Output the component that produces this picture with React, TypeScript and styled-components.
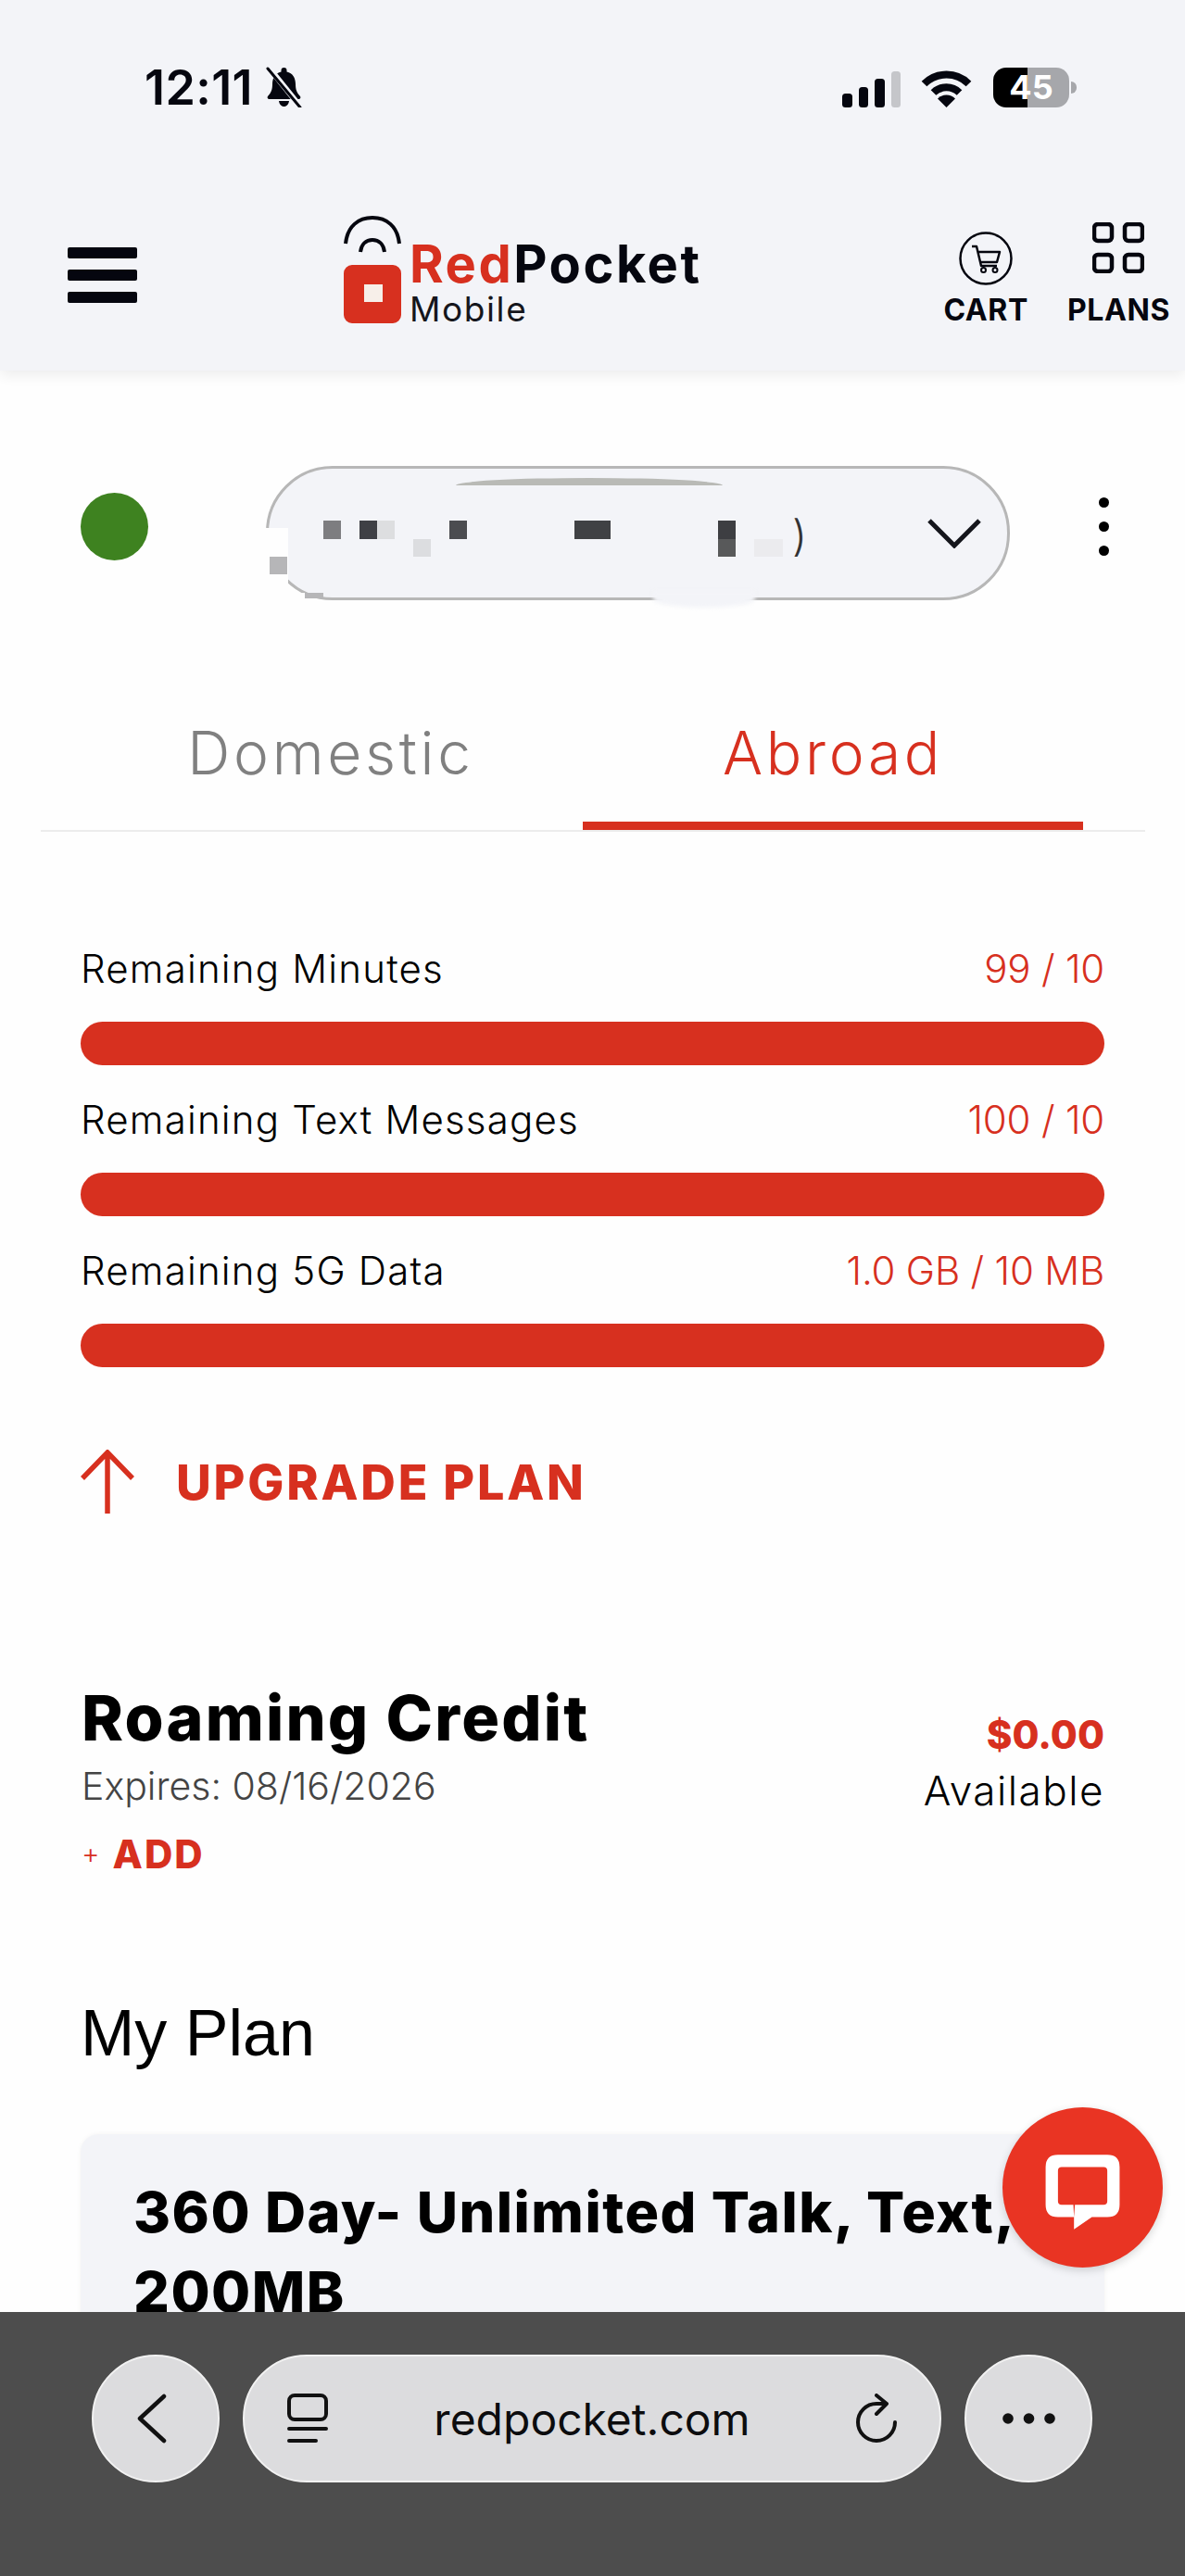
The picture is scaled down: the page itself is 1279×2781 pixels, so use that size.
import React from "react";
import styled, { createGlobalStyle } from "styled-components";

const RED = "#d7301f";
const PANEL = "#f3f4f8";
const INK = "#05060f";
const SANS = `Inter, "Liberation Sans", sans-serif`;

const Global = createGlobalStyle`
  html, body { margin: 0; padding: 0; background: #fff; }
  * { box-sizing: border-box; }
`;

const Shell = styled.div`
  position: relative;
  width: 1279px;
  height: 2781px;
  overflow: hidden;
  background: #fefefe;
  font-family: ${SANS};
  color: #000;
`;

const Header = styled.header`
  height: 400px;
  background: ${PANEL};
  box-shadow: 0 5px 14px rgba(0, 0, 0, 0.07);
`;

const StatusBar = styled.div`
  height: 233px;
  padding: 72px 125px 0 156px;
  display: flex;
  align-items: flex-start;
  justify-content: space-between;
`;

const Clock = styled.div`
  display: flex;
  align-items: center;
  gap: 12px;
  height: 44px;
  font-size: 52px;
  font-weight: 600;
  letter-spacing: 0.4px;
  color: ${INK};
`;

const Indicators = styled.div`
  display: flex;
  align-items: flex-end;
  height: 44px;
`;

const Signal = styled.div`
  display: flex;
  align-items: flex-end;
  gap: 7px;
  margin-right: 22px;
`;

const SignalBar = styled.span<{ $h: number; $off?: boolean }>`
  display: block;
  width: 10.5px;
  height: ${(p) => p.$h}px;
  border-radius: 3.5px;
  background: ${(p) => (p.$off ? "#c5c6ca" : INK)};
`;

const Battery = styled.div`
  position: relative;
  width: 82px;
  height: 43px;
  margin-left: 23px;
  border-radius: 14px;
  background: linear-gradient(90deg, #000 45%, #a6a7ab 45%);
  color: #fff;
  font-size: 36px;
  font-weight: 700;
  line-height: 43px;
  text-align: center;
  &::after {
    content: "";
    position: absolute;
    left: 84px;
    top: 15px;
    width: 6px;
    height: 13px;
    border-radius: 0 6px 6px 0;
    background: #a6a7ab;
  }
`;

const Nav = styled.nav`
  display: flex;
  align-items: flex-start;
  padding: 0 16px 0 73px;
`;

const Burger = styled.div`
  display: flex;
  flex-direction: column;
  gap: 12px;
  width: 75px;
  margin-top: 34px;
`;

const BurgerBar = styled.span`
  display: block;
  height: 12px;
  border-radius: 2px;
  background: ${INK};
`;

const Logo = styled.div`
  display: flex;
  align-items: flex-end;
  gap: 9px;
  margin-left: 223px;
`;

const LogoWords = styled.div`
  display: flex;
  flex-direction: column;
  margin-bottom: -3px;
`;

const Brand = styled.div`
  margin-bottom: 3px;
  font-size: 56px;
  font-weight: 700;
  line-height: 56px;
  letter-spacing: 2.5px;
  color: ${INK};
  span { color: ${RED}; }
`;

const Sub = styled.div`
  font-size: 37px;
  font-weight: 400;
  line-height: 36px;
  letter-spacing: 1.6px;
  color: #15161c;
`;

const Actions = styled.div`
  display: flex;
  gap: 42px;
  margin-left: auto;
  margin-top: 7px;
`;

const Action = styled.div`
  display: flex;
  flex-direction: column;
  align-items: center;
`;

const ActionIcon = styled.div<{ $top: number }>`
  height: 78px;
  padding-top: ${(p) => p.$top}px;
`;

const ActionLabel = styled.div`
  font-size: 32px;
  font-weight: 700;
  line-height: 34px;
  letter-spacing: 0.6px;
  color: ${INK};
`;

const AccountRow = styled.section`
  display: flex;
  align-items: center;
  height: 145px;
  margin-top: 103px;
  padding-left: 87px;
`;

const Dot = styled.div`
  width: 73px;
  height: 73px;
  margin-bottom: 14px;
  border-radius: 50%;
  background: #3e8220;
`;

const Pill = styled.div`
  position: relative;
  display: flex;
  align-items: center;
  justify-content: flex-end;
  width: 803px;
  height: 145px;
  margin-left: 127px;
  padding: 0 28px 0 0;
  border: 3px solid #b7b7b7;
  border-radius: 72px;
  background: ${PANEL};
`;

const Patch = styled.span<{ $x: number; $y: number; $w: number; $h: number; $c: string; $soft?: boolean }>`
  position: absolute;
  left: ${(p) => p.$x - 290}px;
  top: ${(p) => p.$y - 506}px;
  width: ${(p) => p.$w}px;
  height: ${(p) => p.$h}px;
  background: ${(p) => p.$c};
  ${(p) => (p.$soft ? "border-radius: 0 0 50% 50%; filter: blur(2px);" : "")}
`;

const Lens = styled.span`
  position: absolute;
  left: 202px;
  top: 10px;
  width: 288px;
  height: 8px;
  background: #b9bab6;
  border-radius: 50% 50% 0 0 / 100% 100% 0 0;
`;

const MaskedEnd = styled.span`
  margin-right: 130px;
  margin-top: 4px;
  font-size: 46px;
  font-weight: 300;
  line-height: 54px;
  color: #333;
`;

const Kebab = styled.div`
  display: flex;
  flex-direction: column;
  gap: 15px;
  margin-left: 96px;
  margin-bottom: 14px;
`;

const KebabDot = styled.span`
  display: block;
  width: 11px;
  height: 11px;
  border-radius: 50%;
  background: #000;
`;

const Tabs = styled.div`
  display: flex;
  margin: 120px 43px 0 44px;
  padding-left: 41px;
  border-bottom: 2px solid #ececec;
`;

const Tab = styled.div<{ $active?: boolean }>`
  width: ${(p) => (p.$active ? 540 : 544)}px;
  height: 128px;
  padding-bottom: 29px;
  border-bottom: 9px solid ${(p) => (p.$active ? RED : "transparent")};
  font-size: 64px;
  font-weight: 300;
  line-height: 90px;
  letter-spacing: 3.7px;
  text-align: center;
  color: ${(p) => (p.$active ? RED : "#808080")};
`;

const Metrics = styled.section`
  margin: 123px 87px 0;
`;

const MetricHead = styled.div`
  display: flex;
  justify-content: space-between;
  align-items: center;
  height: 48px;
  font-size: 42px;
  font-weight: 300;
  letter-spacing: 1.2px;
`;

const MetricValue = styled.span`
  color: ${RED};
  letter-spacing: -0.2px;
`;

const MetricBar = styled.div`
  height: 47px;
  margin: 34px 0;
  border-radius: 24px;
  background: ${RED};
`;

const Upgrade = styled.div`
  display: flex;
  align-items: center;
  gap: 45px;
  height: 70px;
  margin: 89px 87px 0;
  font-size: 52px;
  font-weight: 800;
  letter-spacing: 2.8px;
  color: ${RED};
`;

const Credit = styled.section`
  display: flex;
  justify-content: space-between;
  margin: 179px 87px 0;
`;

const CreditTitle = styled.h2`
  margin: 0;
  padding-left: 1px;
  font-size: 68px;
  font-weight: 800;
  line-height: 80px;
  letter-spacing: 2.2px;
`;

const Expires = styled.div`
  margin-top: 9px;
  padding-left: 1px;
  font-size: 41px;
  font-weight: 300;
  line-height: 50px;
  color: #444;
`;

const AddLink = styled.div`
  display: flex;
  align-items: center;
  gap: 12px;
  height: 40px;
  margin-top: 28px;
  padding-left: 1px;
  font-size: 42px;
  font-weight: 800;
  letter-spacing: 2px;
  color: ${RED};
`;

const AddPlus = styled.span`
  font-size: 30px;
  font-weight: 300;
`;

const Balance = styled.div`
  padding-top: 34px;
  text-align: right;
`;

const BalanceAmount = styled.div`
  font-size: 42px;
  font-weight: 800;
  line-height: 50px;
  color: ${RED};
`;

const BalanceNote = styled.div`
  margin-top: 10px;
  font-size: 44px;
  font-weight: 300;
  line-height: 50px;
  letter-spacing: 1.5px;
`;

const PlanTitle = styled.h2`
  margin: 129px 87px 0;
  font-family: "Liberation Sans", Arial, sans-serif;
  font-size: 70px;
  font-weight: 400;
  line-height: 90px;
`;

const PlanCard = styled.article`
  margin: 64px 87px 0;
  height: 400px;
  padding: 41px 57px;
  border-radius: 20px;
  background: ${PANEL};
  box-shadow: 0 0 5px rgba(0, 0, 0, 0.05);
`;

const PlanName = styled.h3`
  margin: 0;
  font-size: 61px;
  font-weight: 800;
  line-height: 86px;
  letter-spacing: 1.5px;
`;

const ChatFab = styled.div`
  position: absolute;
  left: 1082px;
  top: 2275px;
  width: 173px;
  height: 173px;
  border-radius: 50%;
  background: #e93423;
  box-shadow: 0 3px 10px rgba(0, 0, 0, 0.16);
  svg { display: block; width: 100%; height: 100%; }
`;

const BrowserBar = styled.footer`
  position: absolute;
  left: 0;
  right: 0;
  bottom: 0;
  height: 285px;
  display: flex;
  gap: 25px;
  padding: 46px 0 0 99px;
  background: #4d4d4d;
`;

const RoundButton = styled.div`
  display: flex;
  align-items: center;
  justify-content: center;
  width: 138px;
  height: 138px;
  border: 2px solid #f2f2f2;
  border-radius: 50%;
  background: #dcdcde;
`;

const BackSvg = styled.svg`
  margin-right: 9px;
`;

const UrlPill = styled.div`
  display: grid;
  grid-template-columns: 1fr auto 1fr;
  align-items: center;
  width: 754px;
  height: 138px;
  padding: 0 46px;
  border: 2px solid #f2f2f2;
  border-radius: 69px;
  background: #dcdcde;
`;

const UrlText = styled.div`
  font-size: 48px;
  font-weight: 400;
  color: #0c0c0e;
`;

const UrlRight = styled.div`
  justify-self: end;
  line-height: 0;
`;

const patches = [
  { x: 284, y: 570, w: 27, h: 84, c: "#fefefe" },
  { x: 311, y: 640, w: 18, h: 14, c: "#fefefe" },
  { x: 291, y: 601, w: 19, h: 19, c: "#b6b6b8" },
  { x: 329, y: 640, w: 20, h: 6, c: "#b6b6b8" },
  { x: 349, y: 562, w: 19, h: 20, c: "#7d7d80" },
  { x: 388, y: 562, w: 19, h: 20, c: "#3f4045" },
  { x: 407, y: 562, w: 19, h: 20, c: "#dddee0" },
  { x: 446, y: 582, w: 19, h: 19, c: "#dcdde0" },
  { x: 485, y: 562, w: 19, h: 20, c: "#4b4c50" },
  { x: 620, y: 562, w: 39, h: 20, c: "#404144" },
  { x: 775, y: 562, w: 19, h: 20, c: "#3d3e42" },
  { x: 775, y: 582, w: 19, h: 19, c: "#58595a" },
  { x: 814, y: 582, w: 31, h: 19, c: "#ebebee" },
];

const metrics = [
  { label: "Remaining Minutes", value: "99 / 10" },
  { label: "Remaining Text Messages", value: "100 / 10" },
  { label: "Remaining 5G Data", value: "1.0 GB / 10 MB" },
];

const BellOff = () => (
  <svg width="43" height="44" viewBox="0 0 43 44" aria-hidden="true">
    <path fill={INK} d="M21.5 1c-2 0-3 1.300-3 3v1.500C12 7 9 12 9 19c0 6-1.500 9-5 13-1 1.500 0 3 1.500 3h32c1.500 0 2.500-1.500 1.500-3-3.500-4-5-7-5-13 0-7-3-12-9.500-13.500V4c0-1.700-1-3-3-3z" />
    <path fill={INK} d="M16 37h11c-.5 3.500-2.500 6-5.500 6S16.500 40.500 16 37z" />
    <path stroke={PANEL} strokeWidth="6" d="M6 2l33 41" />
    <path stroke={INK} strokeWidth="3" strokeLinecap="round" d="M4 2l35 42" />
  </svg>
);

const Wifi = () => (
  <svg width="55" height="40" viewBox="0 0 55 40" aria-hidden="true">
    <path fill="none" stroke={INK} strokeWidth="8" d="M3.500 14.500a34 34 0 0 1 48 0" />
    <path fill="none" stroke={INK} strokeWidth="8" d="M13.500 24a20 20 0 0 1 28 0" />
    <path fill={INK} d="M27.500 40L18 30.500a13.500 13.500 0 0 1 19 0z" />
  </svg>
);

const LogoMark = () => (
  <svg width="62" height="116" viewBox="0 0 62 116" aria-hidden="true">
    <path fill="none" stroke={INK} strokeWidth="4" d="M2 30C4 11 16 2 31 2s27 9 29 28" />
    <path fill="none" stroke={INK} strokeWidth="4" d="M18 39c1-8 6-13 13-13s12 5 13 13" />
    <path fill={RED} fillRule="evenodd" d="M9 53h44a9 9 0 0 1 9 9v45a9 9 0 0 1-9 9H9a9 9 0 0 1-9-9V62a9 9 0 0 1 9-9zm13 21v19h20V74z" />
    <rect x="22" y="74" width="20" height="19" fill="#f7efe9" />
  </svg>
);

const CartIcon = () => (
  <svg width="58" height="58" viewBox="0 0 58 58" fill="none" stroke={INK} aria-hidden="true">
    <circle cx="29" cy="29" r="27.500" strokeWidth="2.500" />
    <path strokeWidth="2.500" strokeLinejoin="round" d="M14 16h5l5 21h17M21 22h23l-3 11H23.500" />
    <circle cx="26.500" cy="41.500" r="2.500" strokeWidth="2" />
    <circle cx="39" cy="41.500" r="2.500" strokeWidth="2" />
  </svg>
);

const PlansIcon = () => (
  <svg width="56" height="55" viewBox="0 0 56 55" fill="none" stroke={INK} strokeWidth="4.500" aria-hidden="true">
    <rect x="2" y="2" width="19" height="18" rx="4" />
    <rect x="35" y="2" width="19" height="18" rx="4" />
    <rect x="2" y="35" width="19" height="18" rx="4" />
    <rect x="35" y="35" width="19" height="18" rx="4" />
  </svg>
);

const Chevron = () => (
  <svg width="58" height="32" viewBox="0 0 58 32" fill="none" stroke="#15161c" strokeWidth="5" aria-hidden="true">
    <path d="M2 2l27 27L56 2" />
  </svg>
);

const UpArrow = () => (
  <svg width="58" height="70" viewBox="0 0 58 70" fill="none" stroke={RED} strokeWidth="5.500" aria-hidden="true">
    <path d="M29 69V3M2 31L29 3l27 28" />
  </svg>
);

const ChatIcon = () => (
  <svg viewBox="5 9 520 520" aria-hidden="true">
    <path
      fill="#fff"
      fillRule="evenodd"
      d="M185 163H345Q385 163 385 203V325Q385 365 345 365H295L237 405V365H185Q145 365 145 325V203Q145 163 185 163ZM197 203Q185 203 185 215V313Q185 325 197 325H235L237 365L240 325H333Q345 325 345 313V215Q345 203 333 203Z"
    />
  </svg>
);

const BackIcon = () => (
  <BackSvg width="32" height="54" viewBox="0 0 32 54" fill="none" stroke="#111" strokeWidth="4.500" strokeLinecap="round" strokeLinejoin="round" aria-hidden="true">
    <path d="M29 3L3 27l26 24" />
  </BackSvg>
);

const TabsIcon = () => (
  <svg width="44" height="54" viewBox="0 0 44 54" fill="none" stroke="#111" strokeWidth="4" strokeLinecap="round" aria-hidden="true">
    <rect x="2" y="2" width="40" height="26" rx="6" />
    <path d="M2 38h40M2 51h29" />
  </svg>
);

const ReloadIcon = () => (
  <svg width="44" height="54" viewBox="0 0 44 54" fill="none" stroke="#111" strokeWidth="4" strokeLinecap="round" strokeLinejoin="round" aria-hidden="true">
    <path d="M42 31a20 20 0 1 1-20-20h11M22 2l11 9-11 11" />
  </svg>
);

const MoreIcon = () => (
  <svg width="57" height="12" viewBox="0 0 57 12" fill="#111" aria-hidden="true">
    <circle cx="6" cy="6" r="5.800" />
    <circle cx="28.500" cy="6" r="5.800" />
    <circle cx="51" cy="6" r="5.800" />
  </svg>
);

export default function App() {
  return (
    <>
      <Global />
      <Shell>
        <Header>
          <StatusBar>
            <Clock>
              12:11
              <BellOff />
            </Clock>
            <Indicators>
              <Signal>
                <SignalBar $h={15} />
                <SignalBar $h={22} />
                <SignalBar $h={31} />
                <SignalBar $h={39} $off />
              </Signal>
              <Wifi />
              <Battery>45</Battery>
            </Indicators>
          </StatusBar>
          <Nav>
            <Burger>
              <BurgerBar />
              <BurgerBar />
              <BurgerBar />
            </Burger>
            <Logo>
              <LogoMark />
              <LogoWords>
                <Brand>
                  <span>Red</span>Pocket
                </Brand>
                <Sub>Mobile</Sub>
              </LogoWords>
            </Logo>
            <Actions>
              <Action>
                <ActionIcon $top={10}>
                  <CartIcon />
                </ActionIcon>
                <ActionLabel>CART</ActionLabel>
              </Action>
              <Action>
                <ActionIcon $top={0}>
                  <PlansIcon />
                </ActionIcon>
                <ActionLabel>PLANS</ActionLabel>
              </Action>
            </Actions>
          </Nav>
        </Header>

        <AccountRow>
          <Dot />
          <Pill>
            <Lens />
            {patches.map((p) => (
              <Patch key={`${p.x}-${p.y}`} $x={p.x} $y={p.y} $w={p.w} $h={p.h} $c={p.c} />
            ))}
            <Patch $x={705} $y={638} $w={110} $h={18} $c={PANEL} $soft />
            <MaskedEnd>)</MaskedEnd>
            <Chevron />
          </Pill>
          <Kebab>
            <KebabDot />
            <KebabDot />
            <KebabDot />
          </Kebab>
        </AccountRow>

        <Tabs>
          <Tab>Domestic</Tab>
          <Tab $active>Abroad</Tab>
        </Tabs>

        <Metrics>
          {metrics.map((m) => (
            <div key={m.label}>
              <MetricHead>
                <span>{m.label}</span>
                <MetricValue>{m.value}</MetricValue>
              </MetricHead>
              <MetricBar />
            </div>
          ))}
        </Metrics>

        <Upgrade>
          <UpArrow />
          UPGRADE PLAN
        </Upgrade>

        <Credit>
          <div>
            <CreditTitle>Roaming Credit</CreditTitle>
            <Expires>Expires: 08/16/2026</Expires>
            <AddLink>
              <AddPlus>+</AddPlus>
              ADD
            </AddLink>
          </div>
          <Balance>
            <BalanceAmount>$0.00</BalanceAmount>
            <BalanceNote>Available</BalanceNote>
          </Balance>
        </Credit>

        <PlanTitle>My Plan</PlanTitle>
        <PlanCard>
          <PlanName>360 Day- Unlimited Talk, Text, 200MB</PlanName>
        </PlanCard>

        <ChatFab>
          <ChatIcon />
        </ChatFab>

        <BrowserBar>
          <RoundButton>
            <BackIcon />
          </RoundButton>
          <UrlPill>
            <TabsIcon />
            <UrlText>redpocket.com</UrlText>
            <UrlRight>
              <ReloadIcon />
            </UrlRight>
          </UrlPill>
          <RoundButton>
            <MoreIcon />
          </RoundButton>
        </BrowserBar>
      </Shell>
    </>
  );
}
